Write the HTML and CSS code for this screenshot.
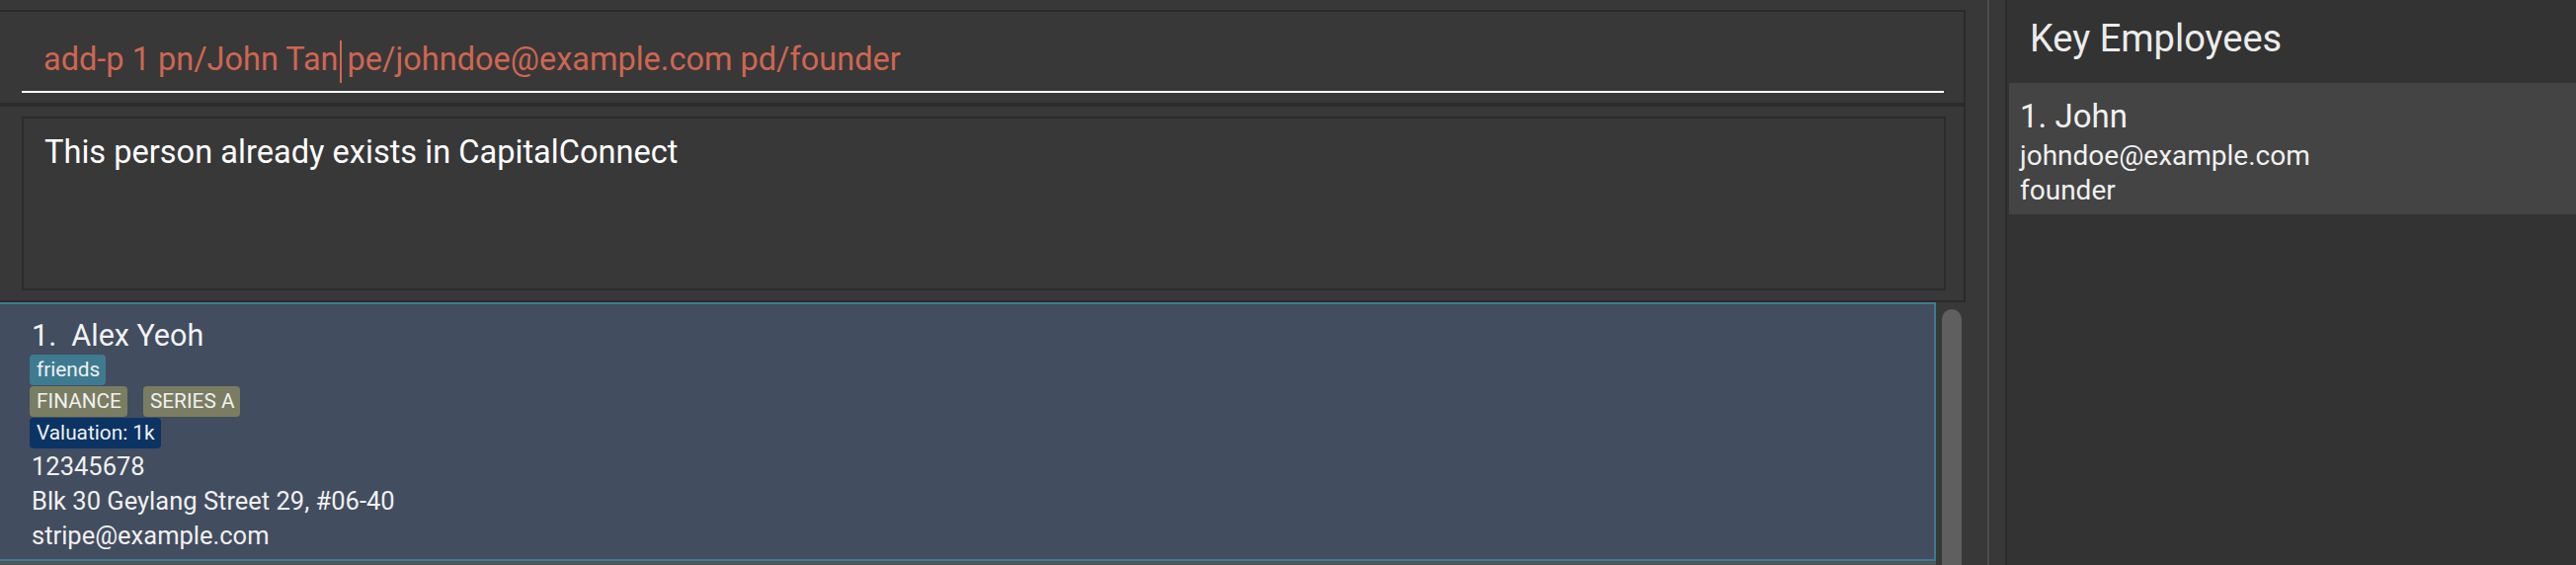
FILE: index.html
```html
<!DOCTYPE html>
<html>
<head>
<meta charset="utf-8">
<link rel="stylesheet" href="styles.css">
</head>
<body>
<div class="app">
  <div class="main">
    <div class="cmd-box">
      <div class="cmd-text">add-p 1 pn/John Tan<span class="caret"></span> pe/johndoe@example.com pd/founder</div>
      <div class="cmd-underline"></div>
    </div>
    <div class="result-wrap">
      <div class="result-box">
        <div class="result-text">This person already exists in CapitalConnect</div>
      </div>
    </div>
    <div class="list-area">
      <div class="list">
        <div class="card selected">
          <div class="card-name">1.&nbsp;&nbsp;Alex Yeoh</div>
          <div class="tag-row"><span class="tag tag-teal">friends</span></div>
          <div class="tag-row"><span class="tag tag-olive">FINANCE</span><span class="tag tag-olive">SERIES A</span></div>
          <div class="tag-row"><span class="tag tag-navy">Valuation: 1k</span></div>
          <div class="card-line phone">12345678</div>
          <div class="card-line">Blk 30 Geylang Street 29, #06-40</div>
          <div class="card-line">stripe@example.com</div>
        </div>
        <div class="card odd"></div>
      </div>
      <div class="scroll-track"><div class="scroll-thumb"></div></div>
    </div>
  </div>
  <div class="divider"></div>
  <div class="side">
    <div class="side-title">Key Employees</div>
    <div class="emp-card">
      <div class="emp-name">1. John</div>
      <div class="emp-line">johndoe@example.com</div>
      <div class="emp-line">founder</div>
    </div>
  </div>
</div>
</body>
</html>
```

FILE: styles.css
```css
* { box-sizing: border-box; }
html, body { margin: 0; padding: 0; }
body {
  background: #383838;
  font-family: Roboto, "Liberation Sans", sans-serif;
  color: #ffffff;
  overflow: hidden;
}
.app {
  display: flex;
  width: 2608px;
  height: 572px;
  overflow: hidden;
}
.main {
  width: 2012px;
  flex: none;
  background: #383838;
  padding-top: 10px;
  display: flex;
  flex-direction: column;
}
.cmd-box {
  margin-left: -2px;
  width: 1992px;
  height: 96px;
  border: 2px solid #2b2b2b;
  padding-top: 29px;
}
.cmd-text {
  color: #d06651;
  font-size: 32.5px;
  line-height: 36px;
  height: 36px;
  padding-left: 44px;
  white-space: nowrap;
}
.caret {
  display: inline-block;
  width: 0;
  height: 43px;
  border-left: 2px solid #d06651;
  vertical-align: -13px;
  margin-left: 1px;
  margin-right: -2px;
}
.cmd-underline {
  margin-top: 15px;
  margin-left: 22px;
  width: 1946px;
  height: 2px;
  background: #ffffff;
}
.result-wrap {
  margin-left: -2px;
  width: 1992px;
  height: 200px;
  border: 2px solid #2b2b2b;
  padding: 10px 0 0 22px;
}
.result-box {
  width: 1948px;
  height: 176px;
  border: 2px solid #2b2b2b;
  padding: 14px 0 0 21px;
}
.result-text {
  font-size: 32.6px;
  line-height: 40px;
  white-space: nowrap;
}
.list-area {
  display: flex;
  flex: 1;
  min-height: 0;
}
.list {
  margin-left: -2px;
  width: 1962px;
  display: flex;
  flex-direction: column;
}
.card {
  flex: none;
}
.card.selected {
  height: 262px;
  background: #424d5f;
  border: 2px solid #3e7b91;
  padding: 14px 0 0 32px;
}
.card.odd {
  height: 40px;
  background: #515658;
}
.card-name {
  font-size: 30.5px;
  line-height: 36px;
  height: 37px;
  color: #f2f2f2;
}
.tag-row {
  display: flex;
  gap: 16px;
  height: 32px;
  margin-left: -2px;
}
.tag {
  display: inline-block;
  height: 31px;
  padding: 0 6px 0 7px;
  border-radius: 4px;
  font-size: 20.8px;
  line-height: 31px;
  color: #f0f0f0;
}
.tag-teal { background: #3e7b91; }
.tag-olive { background: #7a7d62; }
.tag-navy { background: #0b3464; }
.card-line {
  font-size: 25.5px;
  line-height: 35px;
  height: 35px;
  color: #f0f0f0;
  white-space: nowrap;
}
.scroll-track {
  margin-left: 6px;
  width: 20px;
  padding-top: 7px;
}
.scroll-thumb {
  width: 20px;
  height: 400px;
  background: #5f5f5f;
  border-radius: 10px 10px 0 0;
}
.divider {
  width: 18px;
  flex: none;
  background: #383838;
  border-left: 2px solid #4b4b4b;
}
.side {
  flex: 1;
  background: #333333;
  border-left: 2px solid #2b2b2b;
  padding-left: 2px;
}
.side-title {
  font-size: 38px;
  line-height: 44px;
  height: 84px;
  padding: 17px 0 0 21px;
  color: #ececec;
  white-space: nowrap;
}
.emp-card {
  height: 133px;
  background: #444444;
  padding: 14px 0 0 11px;
  color: #f0f0f0;
}
.emp-name {
  font-size: 33px;
  line-height: 40px;
  height: 42px;
}
.emp-line {
  font-size: 28px;
  line-height: 35px;
  height: 35px;
  white-space: nowrap;
}
```
